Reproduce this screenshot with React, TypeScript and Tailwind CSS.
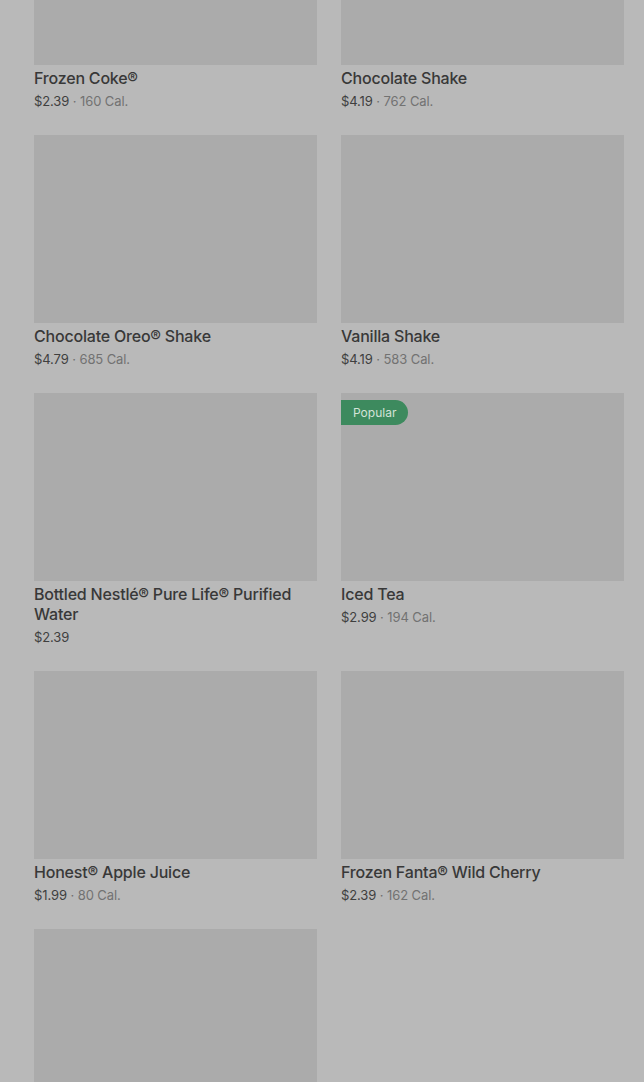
import React from "react";

type Item = { name: string; price: string; cal?: string; popular?: boolean };

const items: Item[] = [
  { name: "Frozen Coke®", price: "$2.39", cal: "160 Cal." },
  { name: "Chocolate Shake", price: "$4.19", cal: "762 Cal." },
  { name: "Chocolate Oreo® Shake", price: "$4.79", cal: "685 Cal." },
  { name: "Vanilla Shake", price: "$4.19", cal: "583 Cal." },
  { name: "Bottled Nestlé® Pure Life® Purified Water", price: "$2.39" },
  { name: "Iced Tea", price: "$2.99", cal: "194 Cal.", popular: true },
  { name: "Honest® Apple Juice", price: "$1.99", cal: "80 Cal." },
  { name: "Frozen Fanta® Wild Cherry", price: "$2.39", cal: "162 Cal." },
  { name: "", price: "" },
];

function Card({ item }: { item: Item }) {
  return (
    <div className="flex flex-col">
      <div className="relative h-[188px] w-full bg-[#ababab]">
        {item.popular && (
          <div className="absolute left-0 top-[7px] flex h-[25px] items-center rounded-r-full bg-[#3d8a5e] pl-[12px] pr-[12px] text-[12px] leading-none text-[#d4e3d8]">
            Popular
          </div>
        )}
      </div>
      {item.name && (
        <>
          <div className="mt-[3px] pr-4 text-[16px] font-medium leading-5 tracking-[-0.2px] text-[#383838]">
            {item.name}
          </div>
          <div className="mt-[3px] text-[13px] leading-5 tracking-[-0.1px]">
            <span className="text-[#3f3f3f]">{item.price}</span>
            {item.cal && (
              <>
                <span className="text-[#6e6e6e]"> · </span>
                <span className="text-[#727272]">{item.cal}</span>
              </>
            )}
          </div>
        </>
      )}
    </div>
  );
}

export default function App() {
  return (
    <div
      className="h-[1082px] w-full overflow-hidden bg-[#b9b9b9]"
      style={{ fontFamily: "Inter, 'Noto Sans', sans-serif" }}
    >
      <div className="-mt-[123px] grid grid-cols-2 gap-x-[24px] gap-y-[24px] pl-[34px] pr-[20px]">
        {items.map((it, i) => (
          <Card key={i} item={it} />
        ))}
      </div>
    </div>
  );
}
